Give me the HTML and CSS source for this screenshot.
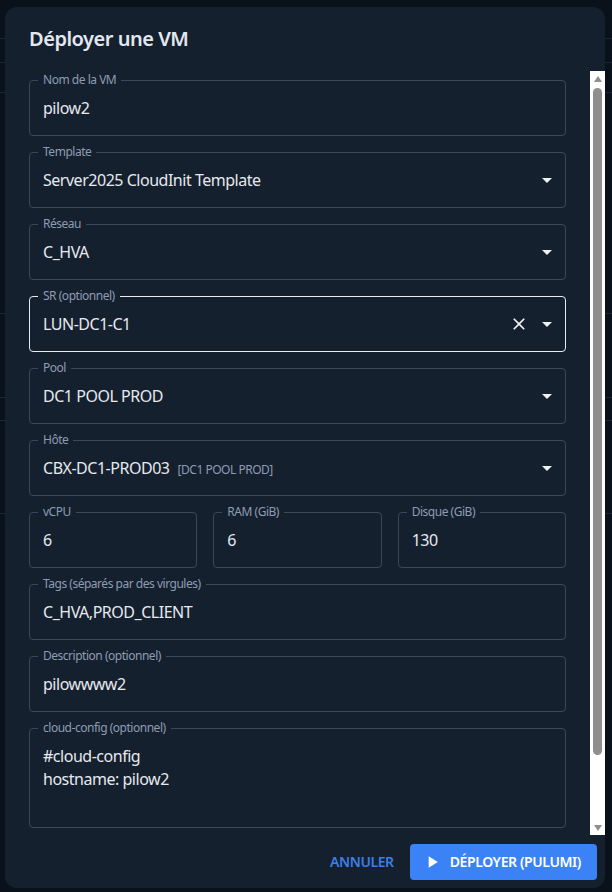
FILE: index.html
```html
<!DOCTYPE html>
<html lang="fr">
<head>
<meta charset="utf-8">
<title>Déployer une VM</title>
<link rel="stylesheet" href="styles.css">
</head>
<body>
<div class="dialog">
  <h2 class="title">Déployer une VM</h2>
  <div class="content">
    <div class="form">
      <fieldset class="fs"><legend>Nom de la VM</legend><div class="inp"><span class="val">pilow2</span></div></fieldset>
      <fieldset class="fs"><legend>Template</legend><div class="inp"><span class="val">Server2025 CloudInit Template</span><svg class="arrow" viewBox="0 0 24 24"><path d="M7 10l5 5 5-5z"/></svg></div></fieldset>
      <fieldset class="fs"><legend>Réseau</legend><div class="inp"><span class="val">C_HVA</span><svg class="arrow" viewBox="0 0 24 24"><path d="M7 10l5 5 5-5z"/></svg></div></fieldset>
      <fieldset class="fs hover"><legend>SR (optionnel)</legend><div class="inp"><span class="val">LUN-DC1-C1</span><svg class="clear" viewBox="0 0 24 24"><path d="M19 6.41 17.59 5 12 10.59 6.41 5 5 6.41 10.59 12 5 17.59 6.41 19 12 13.41 17.59 19 19 17.59 13.41 12z"/></svg><svg class="arrow" viewBox="0 0 24 24"><path d="M7 10l5 5 5-5z"/></svg></div></fieldset>
      <fieldset class="fs"><legend>Pool</legend><div class="inp"><span class="val">DC1 POOL PROD</span><svg class="arrow" viewBox="0 0 24 24"><path d="M7 10l5 5 5-5z"/></svg></div></fieldset>
      <fieldset class="fs"><legend>Hôte</legend><div class="inp"><span class="val">CBX-DC1-PROD03<span class="sub">[DC1 POOL PROD]</span></span><svg class="arrow" viewBox="0 0 24 24"><path d="M7 10l5 5 5-5z"/></svg></div></fieldset>
      <div class="row3">
        <fieldset class="fs"><legend>vCPU</legend><div class="inp"><span class="val">6</span></div></fieldset>
        <fieldset class="fs"><legend>RAM (GiB)</legend><div class="inp"><span class="val">6</span></div></fieldset>
        <fieldset class="fs"><legend>Disque (GiB)</legend><div class="inp"><span class="val">130</span></div></fieldset>
      </div>
      <fieldset class="fs"><legend>Tags (séparés par des virgules)</legend><div class="inp"><span class="val">C_HVA,PROD_CLIENT</span></div></fieldset>
      <fieldset class="fs"><legend>Description (optionnel)</legend><div class="inp"><span class="val">pilowwww2</span></div></fieldset>
      <fieldset class="fs multi"><legend>cloud-config (optionnel)</legend><div class="ta">#cloud-config<br>hostname: pilow2</div></fieldset>
    </div>
    <div class="scrollbar" aria-hidden="true">
      <div class="sb-btn up"></div>
      <div class="sb-track"><div class="sb-thumb"></div></div>
      <div class="sb-btn down"></div>
    </div>
  </div>
  <div class="actions">
    <button class="btn text-btn">Annuler</button>
    <button class="btn primary"><svg class="play" viewBox="0 0 24 24"><path d="M8 5v14l11-7z"/></svg>Déployer (Pulumi)</button>
  </div>
</div>
</body>
</html>
```

FILE: styles.css
```css
* { box-sizing: border-box; }

html, body {
  margin: 0;
  padding: 0;
  height: 100%;
}

body {
  background-color: #09121b;
  background-image:
    linear-gradient(#15263a, #15263a),
    linear-gradient(#15263a, #15263a),
    linear-gradient(#15263a, #15263a),
    linear-gradient(#17283c, #17283c),
    linear-gradient(#17283c, #17283c),
    linear-gradient(#17283c, #17283c),
    linear-gradient(#17283c, #17283c);
  background-size: 100% 1px;
  background-repeat: no-repeat;
  background-position: 0 38px, 0 62px, 0 92px, 0 313px, 0 397px, 0 420px, 0 513px;
  font-family: "Noto Sans", "Open Sans", sans-serif;
  letter-spacing: -0.03em;
  overflow: hidden;
}

.dialog {
  margin: 7px 0 0 5px;
  width: 600px;
  height: 881px;
  background: #15202f;
  border-radius: 12px;
  display: flex;
  flex-direction: column;
  overflow: hidden;
}

.title {
  margin: 0;
  padding: 16px 24px;
  font-size: 20px;
  line-height: 32px;
  font-weight: 600;
  color: #e3e8ef;
  flex: none;
}

.content {
  flex: 1;
  min-height: 0;
  display: flex;
  overflow: hidden;
}

.form {
  flex: 1;
  min-width: 0;
  display: flex;
  flex-direction: column;
  gap: 10px;
  padding: 3px 24px 0;
}

/* scrollbar drawn as a component */
.scrollbar {
  flex: none;
  width: 15px;
  background: #ffffff;
  display: flex;
  flex-direction: column;
}
.sb-btn {
  flex: none;
  height: 15px;
  display: flex;
  align-items: center;
  justify-content: center;
}
.sb-btn::before {
  content: "";
  width: 0;
  height: 0;
  border-left: 4.5px solid transparent;
  border-right: 4.5px solid transparent;
}
.sb-btn.up::before {
  border-bottom: 6px solid #8f8f8f;
}
.sb-btn.down::before {
  border-top: 6px solid #8f8f8f;
}
.sb-track {
  flex: 1;
  padding: 2px 3px;
}
.sb-thumb {
  height: 667px;
  background: #8f8f8f;
  border-radius: 5px;
}

.fs {
  margin: 0;
  padding: 0 8px 5px;
  min-width: 0;
  border: 1px solid #3b4858;
  border-radius: 4px;
}
.fs.hover {
  border-color: #e8ebef;
}

.fs legend {
  font-size: 12px;
  line-height: 12px;
  padding: 0 5px;
  color: #8e9cb2;
  white-space: nowrap;
}

.inp {
  height: 44px;
  display: flex;
  align-items: center;
  padding-left: 5px;
  font-size: 16px;
  color: #e6e9ee;
}

.val {
  flex: 1;
  min-width: 0;
  white-space: nowrap;
}

.sub {
  margin-left: 8px;
  font-size: 12px;
  color: #8e9cb2;
}

.arrow {
  width: 24px;
  height: 24px;
  fill: #eef1f5;
  margin-right: -2px;
  flex: none;
}

.clear {
  width: 20px;
  height: 20px;
  fill: #eef1f5;
  margin-right: 6px;
  flex: none;
}

.row3 {
  display: grid;
  grid-template-columns: 1fr 1fr 1fr;
  gap: 16px;
}

.fs.multi {
  padding-bottom: 0;
}

.ta {
  height: 93px;
  padding: 10.5px 0 0 5px;
  font-size: 16px;
  line-height: 23px;
  color: #e6e9ee;
}

.actions {
  flex: none;
  height: 53px;
  padding: 8px;
  display: flex;
  justify-content: flex-end;
  align-items: center;
  gap: 8px;
}

.btn {
  font-family: inherit;
  font-size: 14px;
  font-weight: 600;
  letter-spacing: -0.4px;
  text-transform: uppercase;
  height: 36px;
  border: none;
  border-radius: 4px;
  display: inline-flex;
  align-items: center;
  justify-content: center;
  cursor: pointer;
  line-height: 1;
}

.text-btn {
  background: transparent;
  color: #3b7fe8;
  padding: 0 8px;
  min-width: 64px;
}

.primary {
  background: #3b82f6;
  color: #ffffff;
  padding: 0 16px;
}

.play {
  width: 20px;
  height: 20px;
  fill: #ffffff;
  margin-left: -4px;
  margin-right: 8px;
}
```
